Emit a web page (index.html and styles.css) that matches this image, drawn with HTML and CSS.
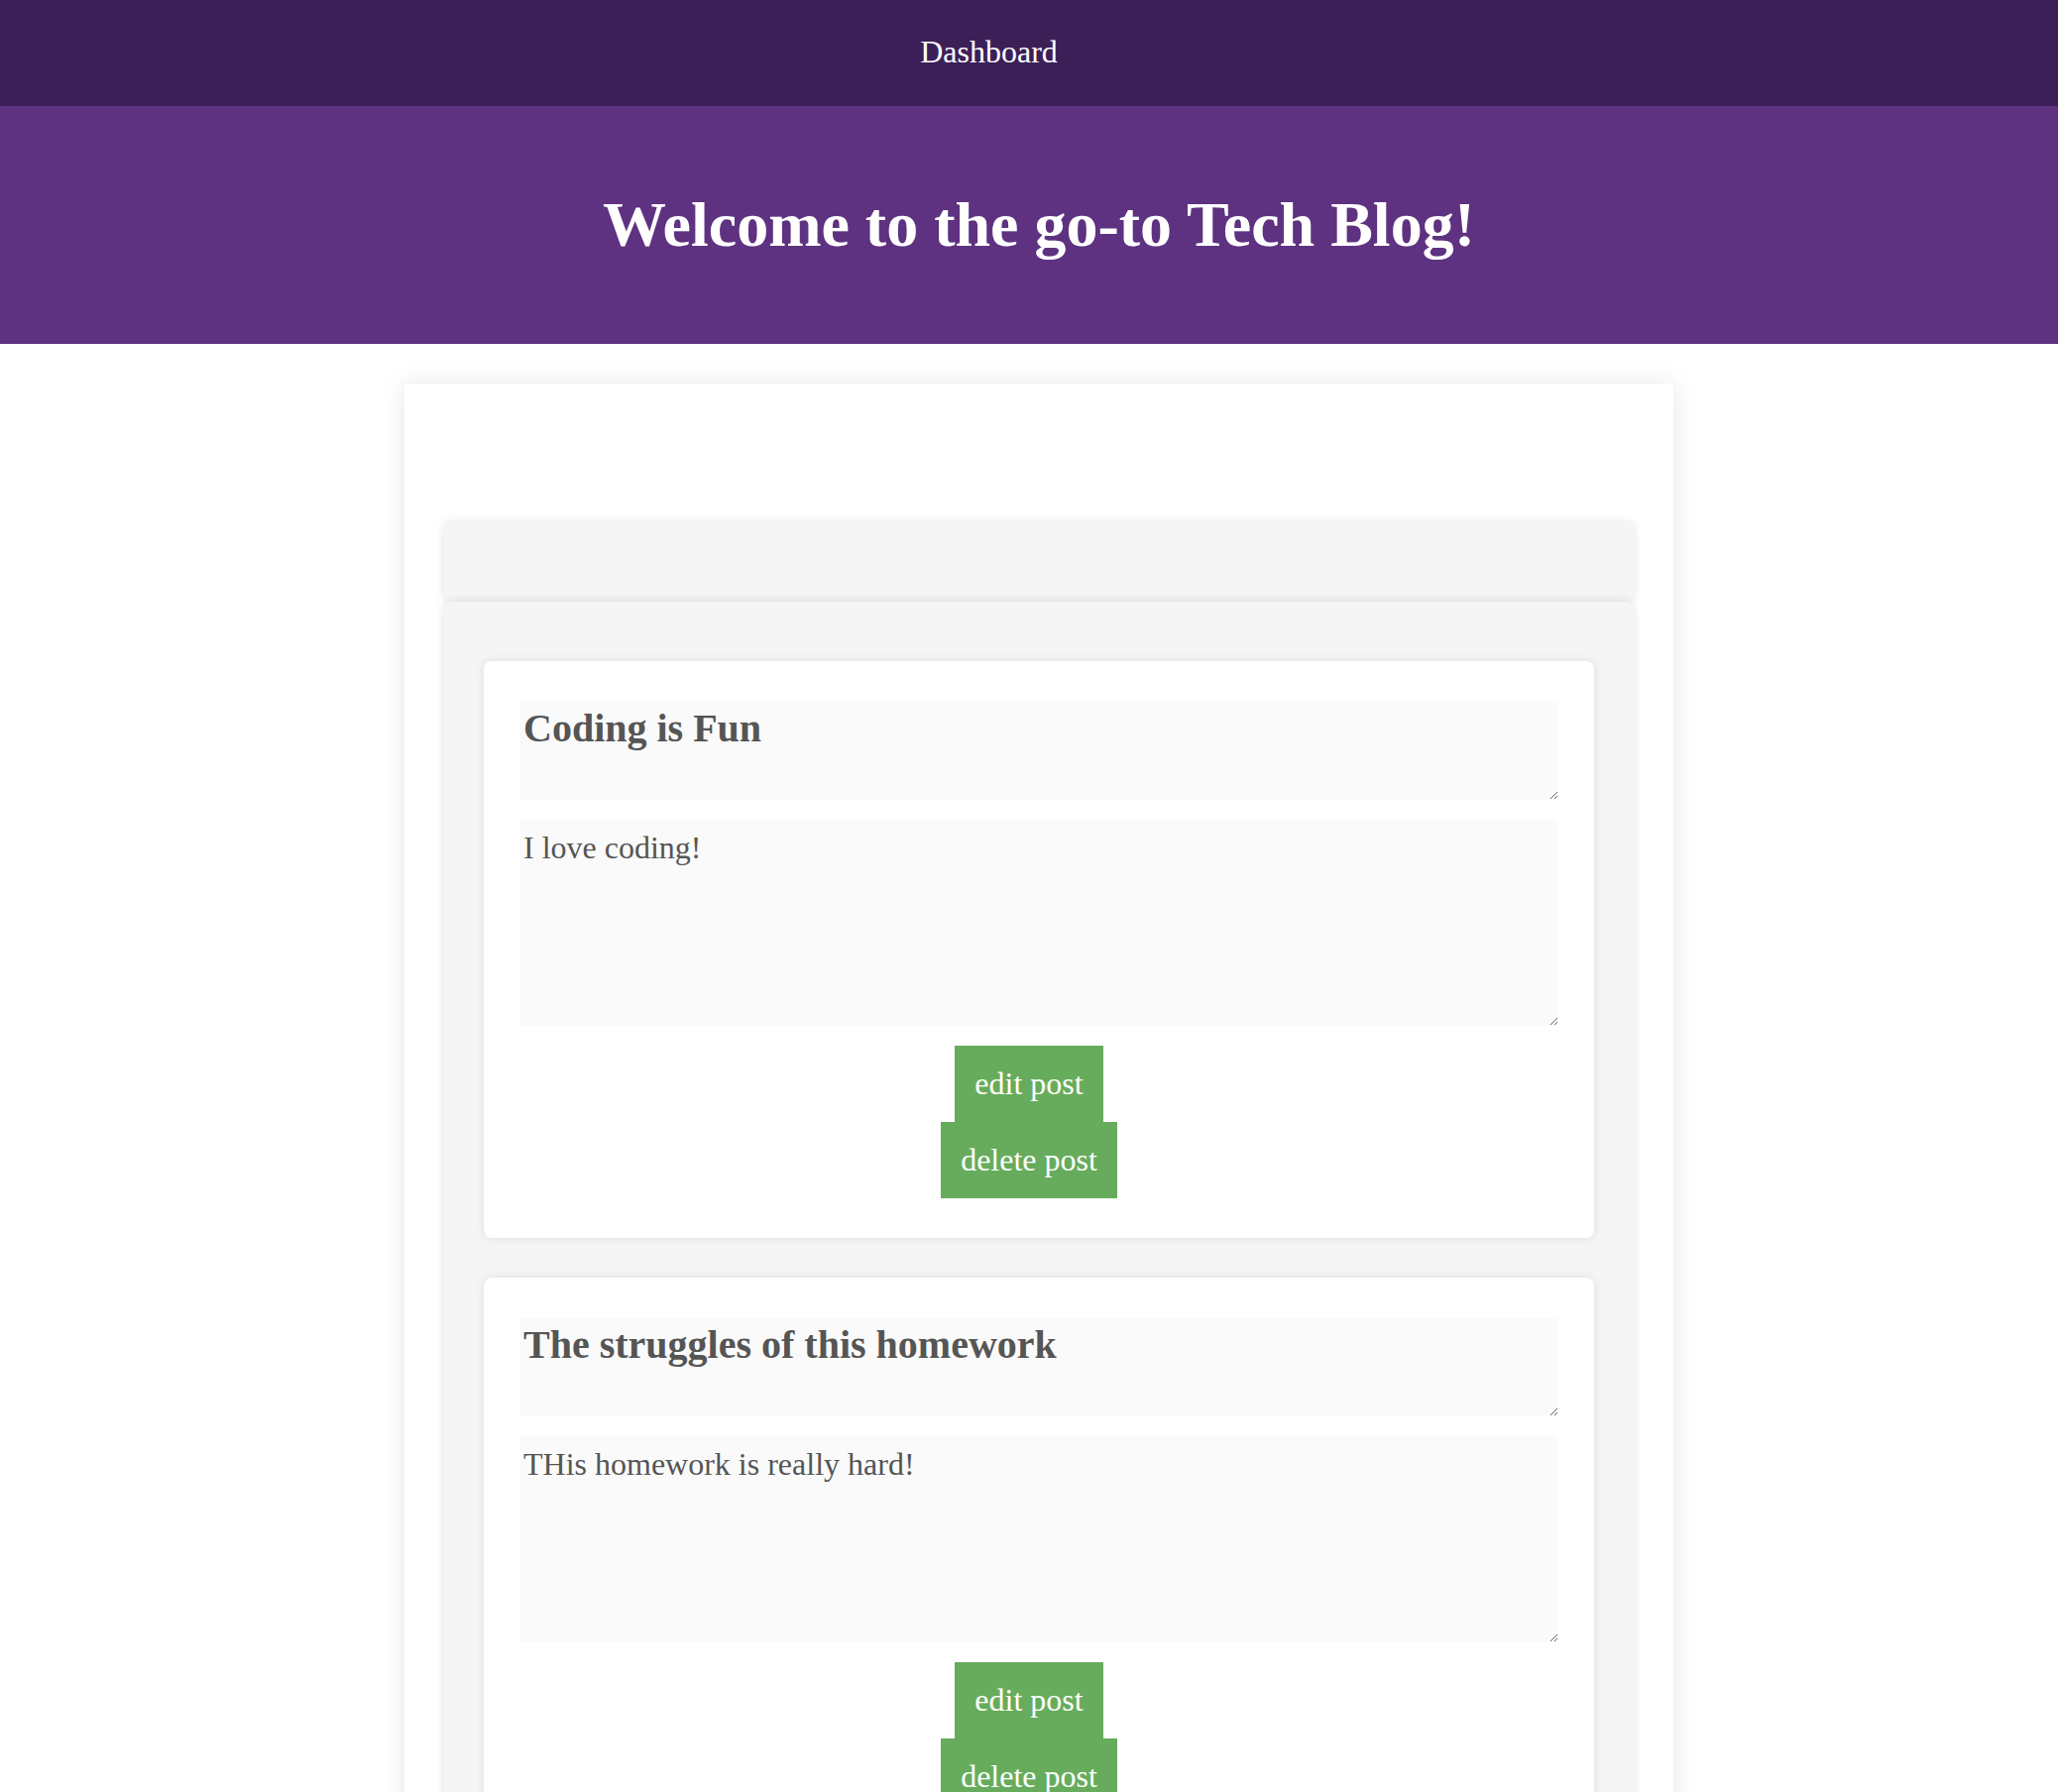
FILE: index.html
```html
<!DOCTYPE html>
<html lang="en">
<head>
<meta charset="utf-8">
<title>Tech Blog - Dashboard</title>
<link rel="stylesheet" href="styles.css">
</head>
<body>
<nav class="topnav">
  <a class="nav-link" href="#">Dashboard</a>
</nav>
<header class="hero">
  <h1 class="hero-title">Welcome to the go-to Tech Blog!</h1>
</header>
<div class="page">
  <main class="container">
    <section class="panel panel-head"></section>
    <section class="panel panel-body">
      <article class="post-card">
        <textarea class="post-title">Coding is Fun</textarea>
        <textarea class="post-content">I love coding!</textarea>
        <div class="post-actions">
          <button class="btn">edit post</button>
          <button class="btn">delete post</button>
        </div>
      </article>
      <article class="post-card">
        <textarea class="post-title">The struggles of this homework</textarea>
        <textarea class="post-content">THis homework is really hard!</textarea>
        <div class="post-actions">
          <button class="btn">edit post</button>
          <button class="btn">delete post</button>
        </div>
      </article>
    </section>
  </main>
</div>
</body>
</html>
```
FILE: styles.css
```css
* {
  box-sizing: border-box;
}

body {
  margin: 0;
  font-family: "Liberation Serif", "Times New Roman", serif;
  background: #ffffff;
}

.topnav {
  background: #3d1f58;
  display: flex;
  justify-content: center;
  padding: 34px 81px 36px 0;
  height: 107px;
}

.nav-link {
  color: #ffffff;
  text-decoration: none;
  font-size: 32px;
  line-height: normal;
}

.hero {
  background: #5e3280;
  height: 240px;
  display: flex;
  align-items: center;
  justify-content: center;
  padding-left: 20px;
}

.hero-title {
  margin: 0;
  color: #ffffff;
  font-size: 64px;
  font-weight: bold;
  line-height: normal;
}

.page {
  padding-left: 20px;
}

.container {
  width: 1280px;
  margin: 40px auto 0;
  background: #ffffff;
  padding: 140px 40px 40px;
  box-shadow: 0 0 24px rgba(0, 0, 0, 0.1);
}

.panel {
  background: #f5f5f5;
  border-radius: 8px;
  box-shadow: 0 0 10px rgba(0, 0, 0, 0.12);
}

.panel-head {
  height: 80px;
}

.panel-body {
  padding: 60px 40px 40px;
  display: flex;
  flex-direction: column;
  gap: 40px;
}

.post-card {
  background: #ffffff;
  border-radius: 8px;
  box-shadow: 0 0 10px rgba(0, 0, 0, 0.1);
  padding: 40px 36px;
  display: flex;
  flex-direction: column;
  gap: 20px;
}

.post-title,
.post-content {
  display: block;
  width: 100%;
  border: none;
  outline: none;
  background: #fafafa;
  color: #555555;
  font-family: "Liberation Serif", "Times New Roman", serif;
  margin: 0;
}

.post-title {
  height: 100px;
  padding: 4px;
  font-size: 40px;
  font-weight: bold;
  line-height: normal;
}

.post-content {
  height: 208px;
  padding: 10px 4px 4px;
  font-size: 32px;
  line-height: normal;
}

.post-actions {
  display: flex;
  flex-direction: column;
  align-items: center;
  padding-right: 20px;
}

.btn {
  background: #67ac5c;
  color: #ffffff;
  border: none;
  border-radius: 0;
  padding: 20px;
  font-family: "Liberation Serif", "Times New Roman", serif;
  font-size: 32px;
  line-height: normal;
  cursor: pointer;
}
```
